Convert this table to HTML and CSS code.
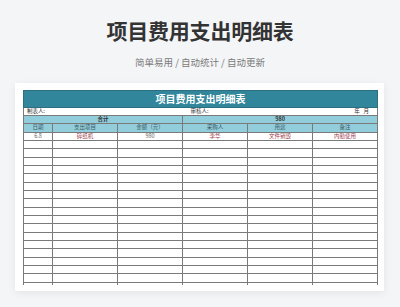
FILE: index.html
```html
<!DOCTYPE html>
<html lang="zh-CN">
<head>
<meta charset="utf-8">
<title>项目费用支出明细表</title>
<link rel="stylesheet" href="styles.css">
</head>
<body>
<header class="hero">
  <h1 class="hero-title">项目费用支出明细表</h1>
  <p class="hero-sub">简单易用 / 自动统计 / 自动更新</p>
</header>
<section class="card">
  <table class="sheet">
    <colgroup>
      <col class="c-date"><col class="c-w"><col class="c-w"><col class="c-w"><col class="c-w"><col class="c-w">
    </colgroup>
    <tr class="r-title"><td colspan="6">项目费用支出明细表</td></tr>
    <tr class="r-meta">
      <td colspan="3" class="meta-l">制表人:</td>
      <td colspan="3" class="meta-r"><span>审核人:</span><span class="ym">年&nbsp;&nbsp;&nbsp;月</span></td>
    </tr>
    <tr class="r-sum"><td colspan="3">合计</td><td colspan="3">980</td></tr>
    <tr class="r-head"><td>日期</td><td>支出项目</td><td>金额（元）</td><td>采购人</td><td>用途</td><td>备注</td></tr>
    <tr class="r-data"><td class="num">6.8</td><td>碎纸机</td><td class="num">980</td><td>李华</td><td>文件销毁</td><td>内勤使用</td></tr>
    <tr><td></td><td></td><td></td><td></td><td></td><td></td></tr>
    <tr><td></td><td></td><td></td><td></td><td></td><td></td></tr>
    <tr><td></td><td></td><td></td><td></td><td></td><td></td></tr>
    <tr><td></td><td></td><td></td><td></td><td></td><td></td></tr>
    <tr><td></td><td></td><td></td><td></td><td></td><td></td></tr>
    <tr><td></td><td></td><td></td><td></td><td></td><td></td></tr>
    <tr><td></td><td></td><td></td><td></td><td></td><td></td></tr>
    <tr><td></td><td></td><td></td><td></td><td></td><td></td></tr>
    <tr><td></td><td></td><td></td><td></td><td></td><td></td></tr>
    <tr><td></td><td></td><td></td><td></td><td></td><td></td></tr>
    <tr><td></td><td></td><td></td><td></td><td></td><td></td></tr>
    <tr><td></td><td></td><td></td><td></td><td></td><td></td></tr>
    <tr><td></td><td></td><td></td><td></td><td></td><td></td></tr>
    <tr><td></td><td></td><td></td><td></td><td></td><td></td></tr>
    <tr><td></td><td></td><td></td><td></td><td></td><td></td></tr>
    <tr><td></td><td></td><td></td><td></td><td></td><td></td></tr>
    <tr><td></td><td></td><td></td><td></td><td></td><td></td></tr>
    <tr class="r-cut"><td></td><td></td><td></td><td></td><td></td><td></td></tr>
  </table>
</section>
</body>
</html>
```
FILE: styles.css
```css
* { box-sizing: border-box; }
html, body { margin: 0; padding: 0; }
body {
  background: #f4f5f7;
  font-family: "Noto Sans CJK SC", "Noto Sans", sans-serif;
  width: 400px;
  height: 307px;
  overflow: hidden;
}
.hero { text-align: center; }
.hero-title {
  margin: 0;
  padding-top: 19px;
  font-size: 21px;
  line-height: 22px;
  font-weight: 700;
  color: #333333;
  letter-spacing: -0.2px;
}
.hero-sub {
  margin: 15px 0 0;
  font-size: 9.5px;
  line-height: 12px;
  color: #7a7a7a;
}
.card {
  margin: 15px 16px 0 15px;
  padding: 7px 7px 6px 8px;
  background: #ffffff;
  box-shadow: 0 2px 8px rgba(0, 0, 0, 0.07);
}
.sheet {
  width: 354px;
  table-layout: fixed;
  border-collapse: collapse;
  font-size: 5.5px;
  color: #444;
}
.c-date { width: 29px; }
.c-w { width: 65px; }
.sheet td {
  padding: 0;
  height: 8.33px;
  line-height: 7px;
  text-align: center;
  border: 1px solid #7a7a7a;
  overflow: hidden;
  white-space: nowrap;
}
.r-title td {
  height: 16.67px;
  background: #31869b;
  color: #ffffff;
  font-size: 10px;
  line-height: 14px;
  font-weight: 700;
  border-color: #2b6f80;
}
.r-meta td { color: #333; }
.meta-l {
  text-align: left !important;
  padding-left: 3px !important;
  border-right: none !important;
}
.meta-r {
  border-left: none !important;
  text-align: left !important;
  padding-left: 8px !important;
}
.meta-r { position: relative; }
.ym { float: right; padding-right: 8px; }
.r-sum td {
  background: #92cddc;
  font-weight: 700;
  color: #333;
}
.r-head td {
  background: #92cddc;
  color: #3c5a64;
}
.r-data td { color: #9a3a4c; }
.r-data td.num { color: #666; }
.r-cut td {
  height: 2.5px;
  border-bottom: none;
}
```
